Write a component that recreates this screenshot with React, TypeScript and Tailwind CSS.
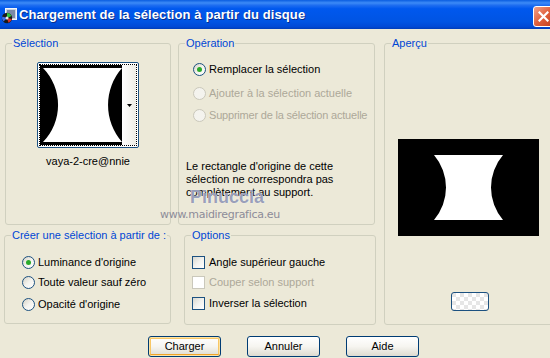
import React from "react";

function Radio({ checked = false, disabled = false }: { checked?: boolean; disabled?: boolean }) {
  return (
    <span
      className={`flex h-[13px] w-[13px] shrink-0 items-center justify-center rounded-full border ${
        disabled
          ? "border-[#CAC8BB] bg-[#F4F3EE]"
          : "border-[#1C5180] bg-linear-to-br from-[#D6D2C5] via-[#F4F3EE] to-white"
      }`}
    >
      {checked && <span className="h-[5px] w-[5px] rounded-full bg-[#2AAA2A]" />}
    </span>
  );
}

function Check({ disabled = false }: { disabled?: boolean }) {
  return (
    <span
      className={`h-[13px] w-[13px] shrink-0 border ${
        disabled ? "border-[#CAC8BB] bg-white" : "border-[#1C5180] bg-linear-to-br from-[#D8D8D0] via-[#F2F2EE] to-white"
      }`}
    />
  );
}

function Row({ children, disabled = false, className = "" }: { children: React.ReactNode; disabled?: boolean; className?: string }) {
  return (
    <div className={`flex h-[13px] items-center gap-[3px] whitespace-nowrap leading-[13px] ${disabled ? "text-[#ACA899]" : "text-black"} ${className}`}>
      {children}
    </div>
  );
}

function Legend({ children }: { children: React.ReactNode }) {
  return <legend className="ml-[6px] whitespace-nowrap px-[1px] leading-[13px] text-[#0046D5]">{children}</legend>;
}

function Btn({ children, def = false }: { children: React.ReactNode; def?: boolean }) {
  return (
    <div
      className={`flex h-[21px] w-[73px] items-center justify-center rounded-[3px] border border-[#003C74] bg-linear-to-b from-white via-[#F6F5F0] to-[#DEDBD0] text-black ${
        def ? "shadow-[inset_0_0_0_1px_#FCE3A6,inset_0_-2px_0_0_#F0A42A,inset_0_0_0_2px_#F8C765]" : ""
      }`}
    >
      {children}
    </div>
  );
}

export default function App() {
  return (
    <div className="relative h-[358px] w-[550px] overflow-hidden bg-[#ECE9D8] font-['Liberation_Sans',Arial,sans-serif] text-[11px]">
      {/* Title bar */}
      <div className="relative flex h-[29px] items-center bg-[linear-gradient(to_bottom,#0A5DE0_0%,#3D8BF7_10%,#1F6EF0_18%,#0058EE_30%,#0054E3_75%,#0049D6_92%,#003DB8_100%)]">
        <svg width="16" height="16" viewBox="0 0 16 16" className="ml-[1px] mt-[2px] shrink-0">
          <rect x="4.5" y="0.5" width="11" height="11" fill="#C9D2DE" stroke="#F4F6FA" />
          <rect x="6" y="2" width="8" height="8" fill="#7A8AA8" />
          <circle cx="6" cy="10" r="5.2" fill="#1A1A1A" />
          <path d="M6 10 L6 5 A5 5 0 0 1 10.5 8 Z" fill="#2EC43A" />
          <path d="M6 10 L10.8 11 A5 5 0 0 1 7.5 14.8 Z" fill="#D8322A" />
          <path d="M6 10 L2.5 13.5 A5 5 0 0 1 1.2 8.5 Z" fill="#3A6AE8" />
          <circle cx="6" cy="10" r="1.5" fill="#E8E8E8" />
        </svg>
        <span className="ml-[2px] whitespace-nowrap text-[13px] font-bold tracking-[0.1px] text-white [text-shadow:1px_1px_0_#0A2E8C]">
          Chargement de la sélection à partir du disque
        </span>
        <div className="absolute left-[533px] top-[6px] flex h-[21px] w-[21px] items-center justify-center rounded-[3px] border border-white bg-linear-to-br from-[#F0A088] via-[#E0603C] to-[#C2401C]">
          <svg width="11" height="11" viewBox="0 0 11 11">
            <path d="M1.5 1.5 L9.5 9.5 M9.5 1.5 L1.5 9.5" stroke="white" strokeWidth="2.2" strokeLinecap="square" />
          </svg>
        </div>
      </div>

      {/* Body */}
      <div className="flex pt-[8px]">
        <div className="flex w-[376px] shrink-0 flex-col">
          <div className="flex">
            <fieldset className="ml-[5px] h-[188px] w-[166px] shrink-0 rounded-[3px] border border-[#D0D0BF]">
              <Legend>Sélection</Legend>
              <div className="mx-auto mt-[12px] flex h-[86px] w-[102px] rounded-[2px] border border-[#1C5180] bg-white p-[1px]">
                <div className="flex flex-1 border border-dotted border-black">
                  <svg width="82" height="80" viewBox="0 0 82 80" className="shrink-0">
                    <rect width="82" height="80" fill="black" />
                    <path d="M3 3 H82 A56 56 0 0 0 82 77 H3 A53 53 0 0 0 3 3 Z" fill="white" />
                  </svg>
                  <div className="flex flex-1 items-center justify-center bg-linear-to-r from-white to-[#EEEDE6]">
                    <svg width="5" height="3" viewBox="0 0 5 3">
                      <path d="M0 0 H5 L2.5 3 Z" fill="black" />
                    </svg>
                  </div>
                </div>
              </div>
              <div className="mt-[7px] text-center leading-[13px] text-black">vaya-2-cre@nnie</div>
            </fieldset>

            <fieldset className="ml-[7px] h-[188px] w-[197px] shrink-0 rounded-[3px] border border-[#D0D0BF]">
              <Legend>Opération</Legend>
              <div className="pl-[14px]">
                <Row className="mt-[13px]">
                  <Radio checked />
                  <span>Remplacer la sélection</span>
                </Row>
                <Row className="mt-[11px]" disabled>
                  <Radio disabled />
                  <span>Ajouter à la sélection actuelle</span>
                </Row>
                <Row className="mt-[9px]" disabled>
                  <Radio disabled />
                  <span className="tracking-[-0.2px]">Supprimer de la sélection actuelle</span>
                </Row>
              </div>
              <div className="mt-[38px] whitespace-nowrap pl-[7px] leading-[13px] text-black">
                Le rectangle d'origine de cette
                <br />
                sélection ne correspondra pas
                <br />
                complètement au support.
              </div>
            </fieldset>
          </div>

          <div className="mt-[4px] flex">
            <fieldset className="ml-[4px] h-[95px] w-[167px] shrink-0 rounded-[3px] border border-[#D0D0BF]">
              <Legend>Créer une sélection à partir de :</Legend>
              <div className="pl-[17px]">
                <Row className="mt-[14px]">
                  <Radio checked />
                  <span>Luminance d'origine</span>
                </Row>
                <Row className="mt-[7px]">
                  <Radio />
                  <span>Toute valeur sauf zéro</span>
                </Row>
                <Row className="mt-[9px]">
                  <Radio />
                  <span>Opacité d'origine</span>
                </Row>
              </div>
            </fieldset>

            <fieldset className="ml-[13px] h-[96px] w-[192px] shrink-0 rounded-[3px] border border-[#D0D0BF]">
              <Legend>Options</Legend>
              <div className="pl-[7px]">
                <Row className="mt-[14px]">
                  <Check />
                  <span className="ml-[1px]">Angle supérieur gauche</span>
                </Row>
                <Row className="mt-[7px]" disabled>
                  <Check disabled />
                  <span className="ml-[1px]">Couper selon support</span>
                </Row>
                <Row className="mt-[8px]">
                  <Check />
                  <span className="ml-[1px]">Inverser la sélection</span>
                </Row>
              </div>
            </fieldset>
          </div>
        </div>

        <fieldset className="ml-[8px] h-[288px] w-[172px] shrink-0 rounded-[3px] border border-[#D0D0BF]">
          <Legend>Aperçu</Legend>
          <svg width="141" height="97" viewBox="0 0 141 97" className="ml-[13px] mt-[89px] block">
            <rect width="141" height="97" fill="black" />
            <path d="M36 16 H105 A50 50 0 0 0 105 81 H36 A50 50 0 0 0 36 16 Z" fill="white" />
          </svg>
          <div className="ml-[66px] mt-[56px] h-[19px] w-[38px] rounded-[3px] border border-[#1C5180] bg-[conic-gradient(#ffffff_25%,#e6e6e6_0_50%,#ffffff_0_75%,#e6e6e6_0)] bg-[length:8px_8px]" />
        </fieldset>
      </div>

      {/* Buttons */}
      <div className="mt-[11px] flex gap-[26px] pl-[148px]">
        <Btn def>Charger</Btn>
        <Btn>Annuler</Btn>
        <Btn>Aide</Btn>
      </div>

      {/* Watermark */}
      <div className="pointer-events-none absolute left-[190px] top-[188px] text-[18px] font-bold leading-[18px] text-[#7E86A8]/80 [text-shadow:0_0_1px_#ffffff]">
        Pinuccia
      </div>
      <div className="pointer-events-none absolute left-[160px] top-[208px] font-['DejaVu_Sans',sans-serif] text-[11px] leading-[13px] tracking-[-0.3px] text-[#8C8C98]">
        www.maidiregrafica.eu
      </div>
    </div>
  );
}
